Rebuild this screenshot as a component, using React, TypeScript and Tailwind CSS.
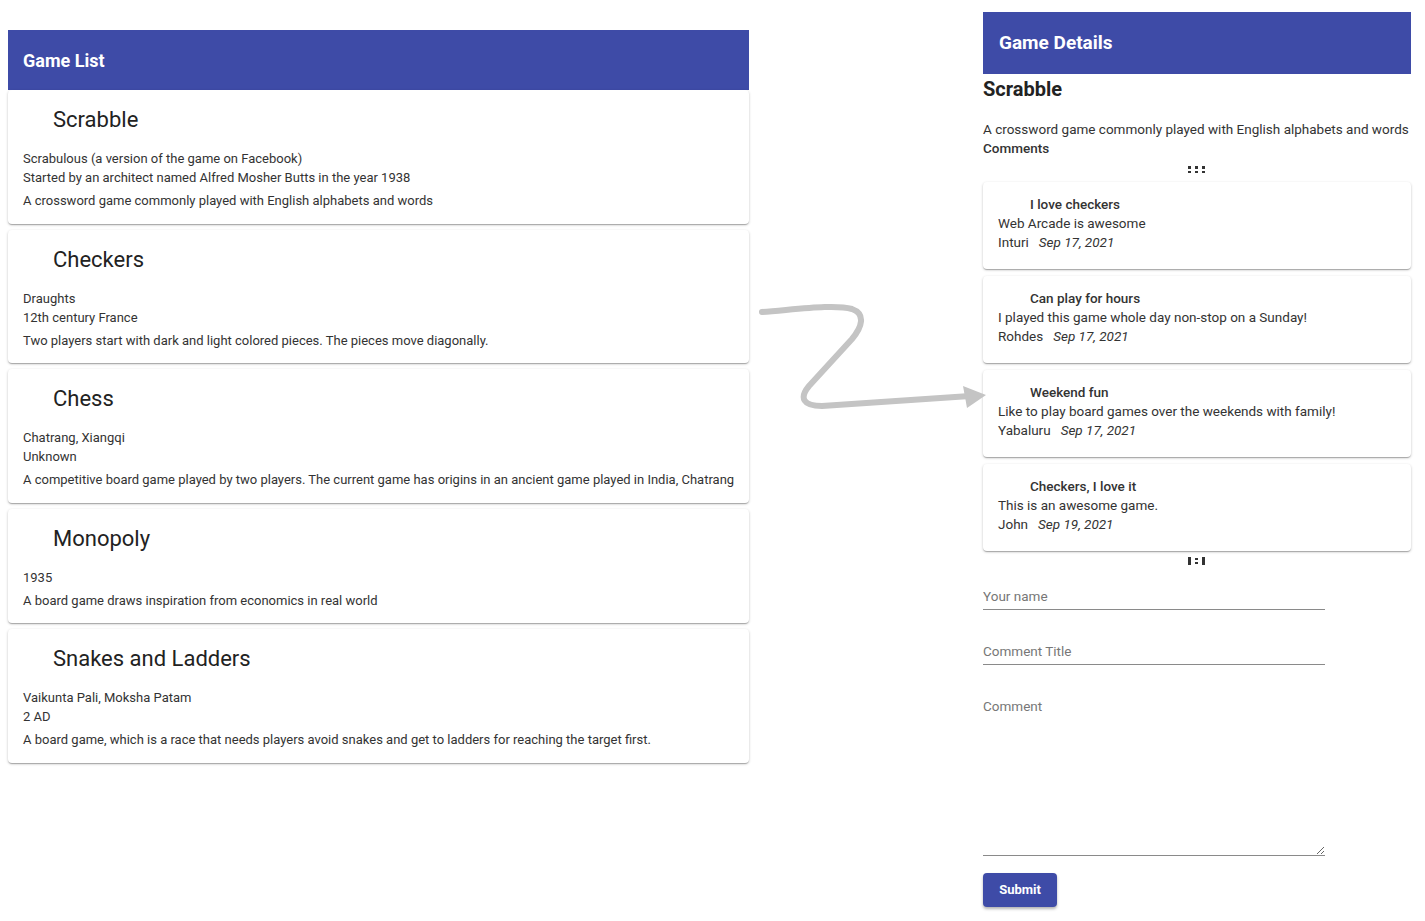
const games = [
  {
    name: 'Scrabble',
    details: ['Scrabulous (a version of the game on Facebook)', 'Started by an architect named Alfred Mosher Butts in the year 1938'],
    description: 'A crossword game commonly played with English alphabets and words',
  },
  {
    name: 'Checkers',
    details: ['Draughts', '12th century France'],
    description: 'Two players start with dark and light colored pieces. The pieces move diagonally.',
  },
  {
    name: 'Chess',
    details: ['Chatrang, Xiangqi', 'Unknown'],
    description:
      'A competitive board game played by two players. The current game has origins in an ancient game played in India, Chatrang',
  },
  {
    name: 'Monopoly',
    details: ['1935'],
    description: 'A board game draws inspiration from economics in real world',
  },
  {
    name: 'Snakes and Ladders',
    details: ['Vaikunta Pali, Moksha Patam', '2 AD'],
    description: 'A board game, which is a race that needs players avoid snakes and get to ladders for reaching the target first.',
  },
];

const comments = [
  { title: 'I love checkers', body: 'Web Arcade is awesome', author: 'Inturi', date: 'Sep 17, 2021' },
  { title: 'Can play for hours', body: 'I played this game whole day non-stop on a Sunday!', author: 'Rohdes', date: 'Sep 17, 2021' },
  { title: 'Weekend fun', body: 'Like to play board games over the weekends with family!', author: 'Yabaluru', date: 'Sep 17, 2021' },
  { title: 'Checkers, I love it', body: 'This is an awesome game.', author: 'John', date: 'Sep 19, 2021' },
];

const card =
  'bg-white rounded-[4px] shadow-[0_1px_3px_0_rgba(0,0,0,0.2),0_1px_1px_0_rgba(0,0,0,0.14),0_2px_1px_-1px_rgba(0,0,0,0.12)]';

function GameList() {
  return (
    <div className="w-[741px] mt-[30px] ml-2 shrink-0">
      <div className="h-[60px] bg-[#3e4ba7] flex items-center px-[15px]">
        <h1 className="text-white text-[18px] font-bold">Game List</h1>
      </div>
      <div className="flex flex-col gap-[6px]">
        {games.map((g) => (
          <div key={g.name} className={`${card} pt-[14px] pb-[13.5px] pl-[15px] pr-[6px]`}>
            <h2 className="pl-[30px] text-[22px] leading-[32px] text-[#222]">{g.name}</h2>
            <div className="mt-[13px] text-[13px] leading-[19px] text-[#333]">
              {g.details.map((d) => (
                <div key={d}>{d}</div>
              ))}
              <div className="mt-[4px]">{g.description}</div>
            </div>
          </div>
        ))}
      </div>
    </div>
  );
}

function GridDots() {
  return (
    <svg width="18" height="7" viewBox="0 0 18 7" className="fill-[#333]">
      <rect x="0" y="0" width="3" height="3" />
      <rect x="7" y="0" width="3" height="3" />
      <rect x="14" y="0" width="3" height="3" />
      <rect x="0" y="5" width="3" height="3" />
      <rect x="7" y="5" width="3" height="3" />
      <rect x="14" y="5" width="3" height="3" />
    </svg>
  );
}

function GridBars() {
  return (
    <svg width="18" height="8" viewBox="0 0 18 8" className="fill-[#333]">
      <rect x="0" y="0" width="3" height="8" />
      <rect x="7" y="1" width="3" height="2" />
      <rect x="7" y="5" width="3" height="2" />
      <rect x="14" y="0" width="3" height="8" />
    </svg>
  );
}

function GameDetails() {
  return (
    <div className="w-[428px] mt-3 ml-[234px] shrink-0 text-[13.5px] text-[#333]">
      <div className="h-[62px] bg-[#3e4ba7] flex items-center px-4">
        <h1 className="text-white text-[19px] font-bold">Game Details</h1>
      </div>
      <h2 className="mt-[2px] text-[20px] leading-[26px] font-bold text-[#222]">Scrabble</h2>
      <p className="mt-[18px] leading-[19px]">A crossword game commonly played with English alphabets and words</p>
      <p className="leading-[19px] font-medium">Comments</p>
      <div className="flex justify-center mt-[8px] h-[7px]">
        <GridDots />
      </div>
      <div className="mt-[9px] flex flex-col gap-[7px]">
        {comments.map((c) => (
          <div key={c.title} className={`${card} h-[87px] pt-[13px] px-[15px] leading-[19px]`}>
            <div className="pl-[32px] font-medium text-[#333]">{c.title}</div>
            <div>{c.body}</div>
            <div>
              {c.author}
              <span className="ml-[10px] italic">{c.date}</span>
            </div>
          </div>
        ))}
      </div>
      <div className="flex justify-center mt-[6px] h-[8px]">
        <GridBars />
      </div>
      <form className="w-[342px] mt-[18px] flex flex-col">
        <input
          placeholder="Your name"
          className="h-[27px] border-b border-[#8a8a8a] outline-none placeholder:text-[#777] text-[13.5px]"
        />
        <input
          placeholder="Comment Title"
          className="mt-[28px] h-[27px] border-b border-[#8a8a8a] outline-none placeholder:text-[#777] text-[13.5px]"
        />
        <textarea
          placeholder="Comment"
          className="mt-[28px] h-[163px] pt-[3px] border-b border-[#8a8a8a] outline-none placeholder:text-[#777] text-[13.5px]"
        />
        <div>
          <button
            type="button"
            className="mt-[17px] w-[74px] h-[34px] rounded-[4px] bg-[#3e4ba7] text-white text-[13px] font-bold shadow-[0_2px_3px_rgba(0,0,0,0.3)]"
          >
            Submit
          </button>
        </div>
      </form>
    </div>
  );
}

function Arrow() {
  return (
    <svg className="absolute left-0 top-0 pointer-events-none" width="1425" height="921">
      <path
        d="M762 312 C 800 309, 835 304, 852 309 C 866 314, 862 327, 852 339 L 809 386 C 799 398, 803 406, 822 406 L 970 396"
        fill="none"
        stroke="#c4c4c4"
        strokeWidth="6"
        strokeLinecap="round"
      />
      <polygon points="963,386 986,395 967,408" fill="#c4c4c4" />
    </svg>
  );
}

export default function App() {
  return (
    <div className="relative w-[1425px] min-h-[921px] bg-white font-['Roboto',sans-serif]">
      <div className="flex items-start">
        <GameList />
        <GameDetails />
      </div>
      <Arrow />
    </div>
  );
}
